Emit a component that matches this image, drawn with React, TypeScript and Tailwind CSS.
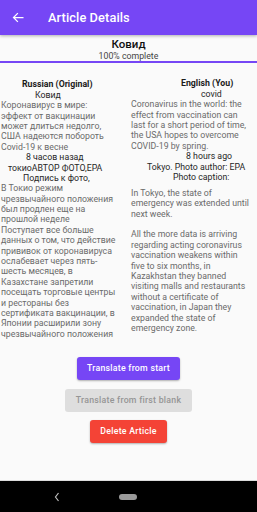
import React from "react";

const PURPLE = "bg-[#7646f5]";

type Line = { t: string; c?: boolean; x?: number; b?: boolean };

const leftLines: Line[] = [
  { t: "Russian (Original)", b: true, x: 21 },
  { t: "Ковид", c: true, x: 34 },
  { t: "Коронавирус в мире:" },
  { t: "эффект от вакцинации" },
  { t: "может длиться недолго," },
  { t: "США надеются побороть" },
  { t: "Covid-19 к весне" },
  { t: "8 часов назад", c: true, x: 25 },
  { t: "токиоАВТОР ФОТО,ЕРА", c: true, x: 7 },
  { t: "Подпись к фото,", c: true, x: 22 },
  { t: "В Токио режим" },
  { t: "чрезвычайного положения" },
  { t: "был продлен еще на" },
  { t: "прошлой неделе" },
  { t: "Поступает все больше" },
  { t: "данных о том, что действие" },
  { t: "прививок от коронавируса" },
  { t: "ослабевает через пять-" },
  { t: "шесть месяцев, в" },
  { t: "Казахстане запретили" },
  { t: "посещать торговые центры" },
  { t: "и рестораны без" },
  { t: "сертификата вакцинации, в" },
  { t: "Японии расширили зону" },
  { t: "чрезвычайного положения" },
];

const rightTop: Line[] = [
  { t: "English (You)", b: true, x: 50 },
  { t: "covid", c: true, x: 70 },
  { t: "Coronavirus in the world: the" },
  { t: "effect from vaccination can" },
  { t: "last for a short period of time," },
  { t: "the USA hopes to overcome" },
  { t: "COVID-19 by spring." },
  { t: "8 hours ago", c: true, x: 55 },
  { t: "Tokyo. Photo author: EPA", c: true, x: 16 },
  { t: "Photo caption:", c: true, x: 42 },
];

const rightBottom: Line[] = [
  { t: "In Tokyo, the state of" },
  { t: "emergency was extended until" },
  { t: "next week." },
  { t: "\u00a0" },
  { t: "All the more data is arriving" },
  { t: "regarding acting coronavirus" },
  { t: "vaccination weakens within" },
  { t: "five to six months, in" },
  { t: "Kazakhstan they banned" },
  { t: "visiting malls and restaurants" },
  { t: "without a certificate of" },
  { t: "vaccination, in Japan they" },
  { t: "expanded the state of" },
  { t: "emergency zone." },
];

function Lines({ lines }: { lines: Line[] }) {
  return (
    <>
      {lines.map((l, i) => (
        <div
          key={i}
          className={
            "whitespace-nowrap h-[10.4px] leading-[10.4px] " +
            (l.b ? "font-bold text-[#1a1a1a] " : l.c ? "text-[#262626] " : "text-[#6a6a6a] ")
          }
          style={l.x !== undefined ? { paddingLeft: l.x } : undefined}
        >
          {l.t}
        </div>
      ))}
    </>
  );
}

export default function App() {
  return (
    <div
      className="w-[257px] h-[512px] flex flex-col bg-[#fafafa] overflow-hidden"
      style={{ fontFamily: "Roboto, 'Noto Sans', sans-serif" }}
    >
      <div className={`h-[35px] ${PURPLE} flex items-center shrink-0 shadow-[0_1px_3px_rgba(0,0,0,0.3)] relative z-10`}>
        <svg width="15" height="15" viewBox="0 0 24 24" className="ml-[11px]" fill="none">
          <path d="M20 12H4M11 5l-7 7 7 7" stroke="white" strokeWidth="2" />
        </svg>
        <div className="ml-[22px] text-white text-[12.8px] font-medium tracking-[0.1px]">Article Details</div>
      </div>
      <div className="flex-1 flex flex-col">
        <div className="pt-[2.5px] text-center">
          <div className="text-[11.5px] leading-[13px] font-medium text-[#111]">Ковид</div>
          <div className="text-[8.75px] leading-[10.4px] text-[#444]">100% complete</div>
        </div>
        <div className={`mt-[0.5px] h-[2px] ${PURPLE}`} />
        <div className="mt-[15px] flex text-[8.75px]">
          <div className="w-[131px] pl-[1px] pt-[1px]">
            <Lines lines={leftLines} />
          </div>
          <div className="flex-1">
            <Lines lines={rightTop} />
            <div className="mt-[5.5px]">
              <Lines lines={rightBottom} />
            </div>
          </div>
        </div>
        <div className="mt-[18px] flex flex-col items-center gap-[8.5px] text-[8.75px] font-medium tracking-[0.25px]">
          <div className={`h-[23px] px-[10.5px] rounded-[3px] ${PURPLE} text-white flex items-center shadow-[0_1px_2px_rgba(0,0,0,0.3)]`}>
            Translate from start
          </div>
          <div className="h-[23px] px-[10.5px] rounded-[3px] bg-[#dedede] text-[#959595] flex items-center">
            Translate from first blank
          </div>
          <div className="h-[23px] px-[10.5px] rounded-[3px] bg-[#f44336] text-white flex items-center shadow-[0_1px_2px_rgba(0,0,0,0.3)]">
            Delete Article
          </div>
        </div>
      </div>
      <div className="h-[32px] bg-black shrink-0 flex items-center border-t border-[#dcdcdc]">
        <svg width="6" height="10" viewBox="0 0 6 10" className="ml-[54px]" fill="none">
          <path d="M4.5 1L1.5 5l3 4" stroke="#bdbdbd" strokeWidth="1.2" />
        </svg>
        <div className="ml-[59px] w-[18px] h-[6px] rounded-full bg-[#9a9a9a]" />
      </div>
    </div>
  );
}
